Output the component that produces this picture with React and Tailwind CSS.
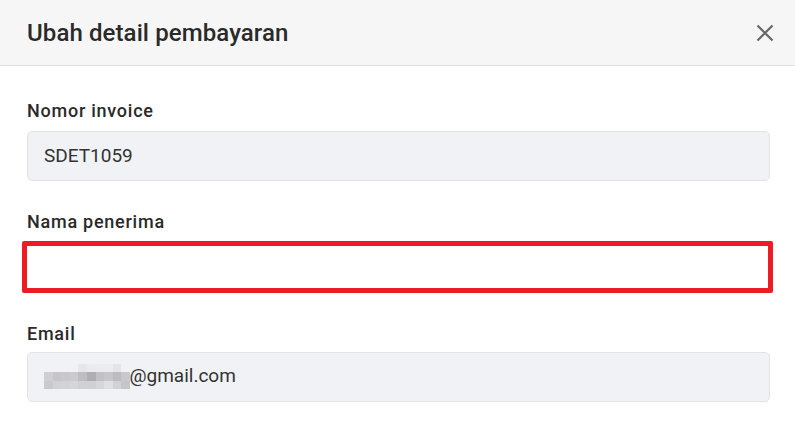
import React from 'react';

const blurRows = [
  ['#f1f2f5', '#f1f2f5', '#f1f2f5', '#f1f2f5', '#e6e7ea', '#ebebee', '#ebecef', '#ebecee', '#e4e5e8', '#f1f2f5'],
  ['#cfcfd3', '#c6c6ca', '#c9c9cd', '#cbcbcf', '#bebec2', '#afafb3', '#c2c2c6', '#c7c7cb', '#bdbdc1', '#c9c9cd'],
  ['#cacace', '#d2d2d6', '#d3d3d7', '#d6d6da', '#d1d1d5', '#d0d0d4', '#d6d6da', '#e0e0e4', '#d2d2d6', '#c6c6ca'],
];

const PixelBlur = () => (
  <div className="flex flex-col">
    {blurRows.map((row, i) => (
      <div key={i} className="flex">
        {row.map((c, j) => (
          <div key={j} className="w-[8.6px] h-[8.6px]" style={{ backgroundColor: c }} />
        ))}
      </div>
    ))}
  </div>
);

const Label = ({ children }) => (
  <div className="text-[18px] leading-[24px] font-medium text-[#2a2a2a] tracking-[0.75px]">{children}</div>
);

const ReadonlyField = ({ children }) => (
  <div className="h-[50px] rounded-[5px] border border-[#e2e3e7] bg-[#f1f2f5] flex items-center pl-[16px] text-[19px] text-[#333]">
    {children}
  </div>
);

export default function App() {
  return (
    <div className="w-[795px] h-[428px] bg-white overflow-hidden" style={{ fontFamily: 'Roboto, "Liberation Sans", sans-serif' }}>
      {/* Header */}
      <div className="h-[66px] bg-[#f6f6f6] border-b border-[#e0e0e0] flex items-center justify-between pl-[27px] pr-[21px]">
        <h2 className="text-[24px] font-medium text-[#2a2a2a] tracking-[0.1px]">Ubah detail pembayaran</h2>
        <button className="text-[#666]">
          <svg width="18" height="18" viewBox="0 0 18 18" fill="none" stroke="currentColor" strokeWidth="2.2">
            <path d="M1.5 1.5 L16.5 16.5 M16.5 1.5 L1.5 16.5" />
          </svg>
        </button>
      </div>

      {/* Body */}
      <div className="pl-[27px] pr-[25px] pt-[33px]">
        <Label>Nomor invoice</Label>
        <div className="mt-[8px]">
          <ReadonlyField>SDET1059</ReadonlyField>
        </div>

        <div className="mt-[29px]">
          <Label>Nama penerima</Label>
        </div>
        <div className="mt-[7px] -ml-[5px] -mr-[3px] h-[52px] border-[5px] border-[#ed1c24] bg-white rounded-[2px]" />

        <div className="mt-[29px]">
          <Label>Email</Label>
        </div>
        <div className="mt-[6px]">
          <ReadonlyField>
            <div className="flex items-center -mt-[1px]">
              <PixelBlur />
              <span className="-ml-[0.5px]">@gmail.com</span>
            </div>
          </ReadonlyField>
        </div>
      </div>
    </div>
  );
}
